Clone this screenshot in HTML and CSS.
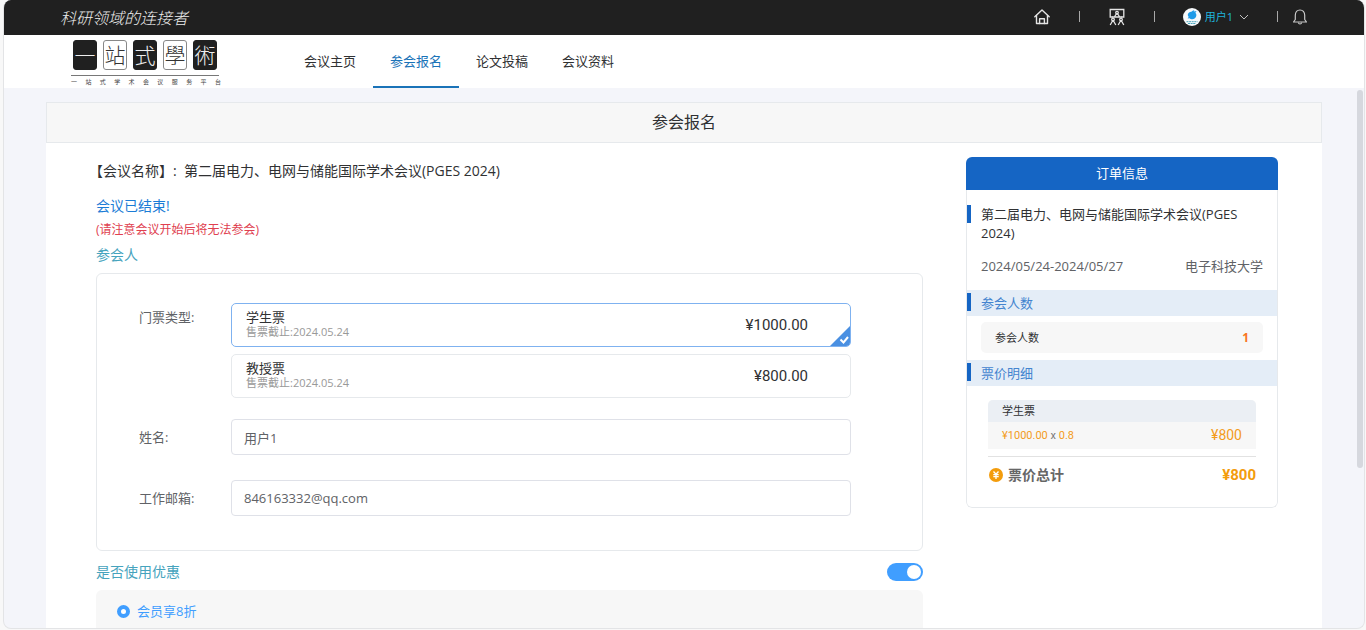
FILE: index.html
```html
<!DOCTYPE html>
<html lang="zh-CN">
<head>
<meta charset="utf-8">
<title>参会报名</title>
<link rel="stylesheet" href="styles.css">
</head>
<body>
<div class="window">
  <header class="topbar">
    <span class="slogan">科研领域的连接者</span>
    <div class="tools">
      <button class="icon-btn" aria-label="首页">
        <svg width="18" height="18" viewBox="0 0 18 18" fill="none" stroke="#e4e4e4" stroke-width="1.4" stroke-linejoin="round" stroke-linecap="round"><path d="M1.800 8.800 9 2l7.200 6.800"/><path d="M3.500 7.500V15.500h11V7.500"/><path d="M6.600 15.500v-4.800h4.800v4.800"/></svg>
      </button>
      <span class="sep"></span>
      <button class="icon-btn" aria-label="会议">
        <svg width="18" height="18" viewBox="0 0 18 18" fill="none" stroke="#e4e4e4" stroke-width="1.300"><path d="M5 9H2.200V1.500h13.600V9H13"/><circle cx="9" cy="4.600" r="1.300"/><path d="M6.300 9 8.200 6.200h1.600L11.700 9M4.500 9h9"/><circle cx="5" cy="11.400" r="1.300"/><circle cx="13" cy="11.400" r="1.300"/><path d="M2.200 17 4.300 13.300h1.400L7.800 17M10.200 17l2.100-3.700h1.400l2.100 3.700"/></svg>
      </button>
      <span class="sep"></span>
      <button class="user">
        <svg width="18" height="18" viewBox="0 0 18 18"><circle cx="9" cy="9" r="9" fill="#f6f9fb"/><path d="M4.800 6.500c.6-2 2-2.800 3.600-2.700 1-.8 1.600-1.400 2.900-1.900l-.5 1.500 2.800-.4-1.200 1.800c1.600 1.500 1.200 4.600-.8 5.800-1.800 1.200-4 .8-5-.4l-2 .3 1.100-1.500c-.7-.7-1-1.500-.9-2.500z" fill="#1e9be8"/><path d="M3.500 13.700h11M5 15.500h8" stroke="#48a5bd" stroke-width="1" stroke-dasharray="2 .6"/></svg>
        <span>用户1</span>
        <svg class="chev" width="10" height="10" viewBox="0 0 10 10" fill="none" stroke="#c0c0c0"><path d="M1 3l4 4 4-4"/></svg>
      </button>
      <div class="notice">
        <span class="sep"></span>
        <button class="icon-btn" aria-label="通知">
          <svg width="16" height="18" viewBox="0 0 16 18" fill="none" stroke="#c8c8c8" stroke-width="1.200" stroke-linejoin="round"><path d="M3.300 11.500V7.300C3.300 4 5.200 2 8 2s4.700 2 4.700 5.300V11.500l1.800 2.500h-13z"/><path d="M6.300 14.500c.2 1 .8 1.500 1.700 1.500s1.500-.5 1.700-1.500"/></svg>
        </button>
      </div>
    </div>
  </header>

  <div class="navbar">
    <a class="logo" href="#">
      <span class="seals"><span class="seal dark">一</span><span class="seal">站</span><span class="seal dark">式</span><span class="seal">學</span><span class="seal dark">術</span></span>
      <span class="tagline"><span>一</span><span>站</span><span>式</span><span>学</span><span>术</span><span>会</span><span>议</span><span>服</span><span>务</span><span>平</span><span>台</span></span>
    </a>
    <nav class="menu">
      <a href="#">会议主页</a>
      <a href="#" class="active">参会报名</a>
      <a href="#">论文投稿</a>
      <a href="#">会议资料</a>
    </nav>
  </div>

  <div class="viewport">
    <main class="page">
      <h1 class="page-title">参会报名</h1>
      <div class="columns">
        <form class="signup">
          <h2 class="conf-name">【会议名称】:&nbsp; 第二届电力、电网与储能国际学术会议(PGES 2024)</h2>
          <p class="ended">会议已结束!</p>
          <p class="warning">(请注意会议开始后将无法参会)</p>
          <h3 class="group-title">参会人</h3>
          <div class="panel">
            <div class="row tickets-row">
              <span class="row-label" id="ticket-label">门票类型:</span>
              <div class="tickets" role="radiogroup" aria-labelledby="ticket-label">
                <label class="ticket selected">
                  <input type="radio" name="ticket" class="hidden-radio" checked>
                  <span class="ticket-info"><span class="ticket-name">学生票</span><span class="ticket-end">售票截止:2024.05.24</span></span>
                  <span class="ticket-price">¥1000.00</span>
                  <svg class="corner" width="22" height="22" viewBox="0 0 22 22"><path d="M22 0v22H0z" fill="#4a90e2"/><path d="M11.500 14.500l3 3 4.500-5.500" fill="none" stroke="#fff" stroke-width="2"/></svg>
                </label>
                <label class="ticket">
                  <input type="radio" name="ticket" class="hidden-radio">
                  <span class="ticket-info"><span class="ticket-name">教授票</span><span class="ticket-end">售票截止:2024.05.24</span></span>
                  <span class="ticket-price">¥800.00</span>
                </label>
              </div>
            </div>
            <div class="row">
              <label class="row-label" for="name">姓名:</label>
              <input class="field" id="name" type="text" value="用户1">
            </div>
            <div class="row">
              <label class="row-label" for="email">工作邮箱:</label>
              <input class="field" id="email" type="text" value="846163332@qq.com">
            </div>
          </div>
          <div class="discount-head">
            <label class="group-title" for="use-discount">是否使用优惠</label>
            <input class="switch" id="use-discount" type="checkbox" role="switch" checked>
          </div>
          <div class="discounts">
            <label class="discount"><input type="radio" name="discount" class="dot" checked>会员享8折</label>
          </div>
        </form>

        <aside class="order">
          <h2 class="order-title">订单信息</h2>
          <div class="order-body">
            <h3 class="order-name">第二届电力、电网与储能国际学术会议(PGES 2024)</h3>
            <div class="order-meta"><span>2024/05/24-2024/05/27</span><span>电子科技大学</span></div>
            <h4 class="section">参会人数</h4>
            <div class="count"><span>参会人数</span><strong>1</strong></div>
            <h4 class="section">票价明细</h4>
            <div class="detail">
              <div class="detail-name">学生票</div>
              <div class="detail-line"><span class="calc">¥1000.00 <i>x</i> 0.8</span><span class="sum">¥800</span></div>
            </div>
            <div class="total">
              <svg width="14" height="14" viewBox="0 0 14 14"><circle cx="7" cy="7" r="7" fill="#f39c0c"/><path d="M4.500 3.500 7 6.300l2.500-2.800M7 6.300V11M4.300 6.700h5.400M4.300 8.700h5.400" fill="none" stroke="#fff" stroke-width="1.300"/></svg>
              <span class="total-label">票价总计</span>
              <span class="total-sum">¥800</span>
            </div>
          </div>
        </aside>
      </div>
    </main>
    <div class="scroll-thumb"></div>
  </div>
</div>
</body>
</html>
```
FILE: styles.css
```css
* { box-sizing: border-box; }

body {
  margin: 0;
  background: #f8f8f8;
  color: #303133;
  font: 13px/20px "Open Sans", "Noto Sans CJK SC", sans-serif;
}

h1, h2, h3, h4, p { margin: 0; font-weight: 400; }
a { color: inherit; text-decoration: none; }
button { padding: 0; border: 0; background: none; font: inherit; color: inherit; }
input { margin: 0; font: inherit; }
svg { display: block; }

.window {
  display: flex;
  flex-direction: column;
  height: calc(100vh - 1px);
  margin: 0 1px 0 3px;
  border: 1px solid #e3e4e6;
  border-top: 0;
  border-radius: 8px;
  background: #f4f5fa;
  overflow: hidden;
}

/* top bar */
.topbar {
  display: flex;
  align-items: center;
  justify-content: space-between;
  flex: none;
  height: 35px;
  padding: 0 56px 2px;
  background: #202020;
}
.slogan {
  color: #eee;
  font: italic 300 16px/20px "Noto Sans CJK SC", sans-serif;
}
.tools { display: flex; align-items: center; gap: 28px; }
.sep { width: 1px; height: 11px; background: #a8a8a8; }
.user { display: flex; align-items: center; gap: 4px; color: #1fb4dc; font-size: 11px; }
.chev { margin-left: 2px; }
.notice { display: flex; align-items: center; gap: 14px; }

/* navigation */
.navbar {
  display: flex;
  flex: none;
  height: 53px;
  padding-left: 67px;
  background: #fff;
}
.logo { width: 150px; padding-top: 5px; margin-right: 66px; }
.seals {
  display: flex;
  gap: 6px;
  width: 148px;
  padding: 0 2px 5px;
  border-bottom: 1px solid #777;
}
.seal {
  display: flex;
  align-items: center;
  justify-content: center;
  flex: none;
  width: 24px;
  height: 30px;
  padding-bottom: 2px;
  border: 1px solid #888;
  border-radius: 3px;
  background: #fff;
  color: #333;
  font: 300 21px/26px "Noto Sans CJK SC", sans-serif;
}
.seal.dark { border-color: #202020; background: #202020; color: #eee; }
.tagline {
  display: flex;
  justify-content: space-between;
  color: #444;
  font-size: 6px;
  line-height: 12px;
}
.menu { display: flex; }
.menu a {
  padding: 0 17px;
  border-bottom: 2px solid transparent;
  line-height: 53px;
}
.menu a.active { border-color: #1a73b8; color: #1a73b8; }

/* content */
.viewport {
  position: relative;
  flex: 1;
  min-height: 0;
  padding: 14px 42px 0;
  overflow: hidden;
}
.page { background: #fff; }
.page-title {
  border: 1px solid #e6e9ec;
  background: #f7f7f7;
  font-size: 16px;
  line-height: 39px;
  text-align: center;
}
.columns {
  display: grid;
  grid-template-columns: 1fr 312px;
  align-items: start;
  gap: 43px;
  padding: 14px 44px 0 50px;
}
.scroll-thumb {
  position: absolute;
  top: 2px;
  right: 1px;
  width: 6px;
  height: 70%;
  border-radius: 3px;
  background: #d6d8de;
}

/* sign-up form */
.signup { padding-top: 4px; }
.conf-name { font-size: 14px; text-spacing-trim: trim-start; }
.ended { margin-top: 15px; color: #1b7cd6; font-size: 14px; }
.warning { margin-top: 4px; color: #e0404f; font-size: 12px; }
.group-title { color: #46a3bd; font-size: 14px; }
.warning + .group-title { margin: 5px 0 8px; }

.panel {
  padding: 29px 71px 34px 42px;
  border: 1px solid #e6e9ec;
  border-radius: 6px;
}
.row { display: grid; grid-template-columns: 92px 1fr; align-items: center; color: #606266; }
.row + .row { margin-top: 25px; }
.tickets-row { align-items: start; }
.tickets-row + .row { margin-top: 21px; }
.tickets-row .row-label { padding-top: 4px; }
.tickets { display: grid; gap: 7px; }
.ticket {
  position: relative;
  display: flex;
  align-items: center;
  justify-content: space-between;
  height: 44px;
  padding: 0 42px 0 14px;
  border: 1px solid #e6e9ec;
  border-radius: 5px;
  color: #303133;
  overflow: hidden;
}
.ticket.selected { border-color: #7fb2f0; }
.hidden-radio { position: absolute; opacity: 0; }
.ticket-info { display: flex; flex-direction: column; padding-bottom: 2px; }
.ticket-name { line-height: 15px; }
.ticket-end { color: #999; font-size: 11px; line-height: 14px; }
.ticket-price { font-family: Roboto, sans-serif; font-size: 15px; }
.corner { position: absolute; right: -1px; bottom: -1px; }
.field {
  width: 100%;
  height: 36px;
  padding: 0 12px;
  border: 1px solid #dfe1e8;
  border-radius: 4px;
  background: #fff;
  color: #606266;
  outline: 0;
}

.discount-head {
  display: flex;
  align-items: center;
  justify-content: space-between;
  margin-top: 11px;
}
.switch {
  appearance: none;
  width: 36px;
  height: 18px;
  padding: 2px;
  border-radius: 9px;
  background: #409eff;
}
.switch::before {
  content: "";
  display: block;
  width: 14px;
  height: 14px;
  margin-left: auto;
  border-radius: 50%;
  background: #fff;
}
.discounts {
  margin-top: 8px;
  padding: 11px 21px 30px;
  border-radius: 6px;
  background: #f7f7f7;
}
.discount { display: flex; align-items: center; gap: 7px; color: #409eff; }
.dot {
  appearance: none;
  width: 13px;
  height: 13px;
  border: 4px solid #409eff;
  border-radius: 50%;
  background: #fff;
}

/* order summary */
.order {
  border-radius: 6px;
  overflow: hidden;
}
.order-title {
  background: #1565c4;
  color: #fff;
  font-size: 13px;
  line-height: 33px;
  text-align: center;
}
.order-body {
  padding: 15px 0 22px;
  border: 1px solid #e6e9ec;
  border-top: 0;
  border-radius: 0 0 6px 6px;
}
.order-name, .section {
  background: linear-gradient(#1565c4, #1565c4) no-repeat 0 0 / 4px 18px;
  font-size: 13px;
}
.order-name { padding: 0 14px; line-height: 19px; }
.order-meta {
  display: flex;
  justify-content: space-between;
  margin: 13px 14px 14px;
  color: #606266;
}
.section {
  padding-left: 14px;
  background-color: #e4edf7;
  background-position: 0 3px;
  color: #4384cf;
  line-height: 26px;
}
.count {
  display: flex;
  justify-content: space-between;
  margin: 6px 14px 7px;
  padding: 0 14px;
  border-radius: 5px;
  background: #f7f7f7;
  font-size: 11px;
  line-height: 31px;
}
.count strong { color: #f9741c; font-size: 12px; }
.detail {
  margin: 14px 21px 0;
  border-radius: 5px 5px 0 0;
  background: #f7f7f7;
  font-size: 11px;
  overflow: hidden;
}
.detail-name { padding: 0 14px; background: #ebeff4; line-height: 22px; }
.detail-line {
  display: flex;
  align-items: center;
  justify-content: space-between;
  padding: 0 14px;
  color: #f39c1c;
  font-family: Roboto, sans-serif;
  line-height: 27px;
}
.calc i { color: #777; font-style: normal; }
.sum { font-size: 14px; }
.total {
  display: flex;
  align-items: center;
  gap: 5px;
  margin: 7px 21px 0;
  padding: 8px 0 0 1px;
  border-top: 1px solid #e2e2e2;
  font-size: 14px;
  font-weight: 700;
}
.total-label { color: #666; }
.total-sum {
  margin-left: auto;
  color: #f39c0c;
  font-family: Roboto, sans-serif;
  font-size: 15px;
}
```
